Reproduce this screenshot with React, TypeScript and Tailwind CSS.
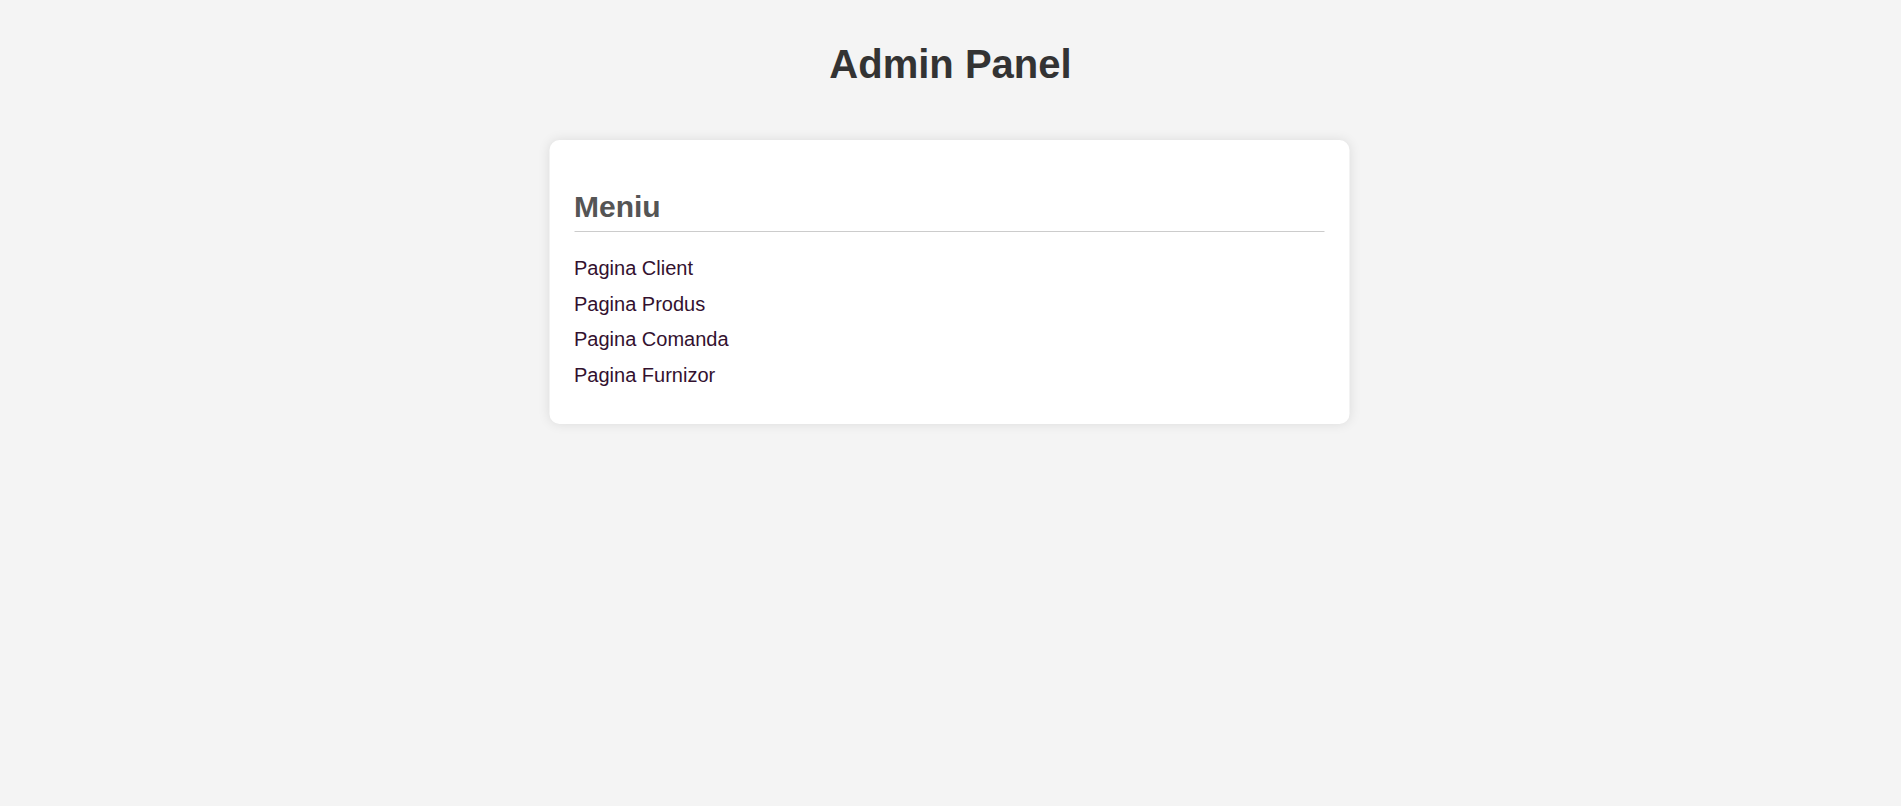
export default function App() {
  const items = ["Pagina Client", "Pagina Produs", "Pagina Comanda", "Pagina Furnizor"];
  return (
    <div className="min-h-[806px] bg-[#f4f4f4] font-['Liberation_Sans',Arial,sans-serif] pt-[41px]">
      <h1 className="text-center text-[40px] font-bold leading-[46px] text-[#333] m-0">Admin Panel</h1>
      <div className="mx-auto mt-[53px] w-[800px] -translate-x-[1.5px] rounded-[10px] bg-white px-[25px] pt-[50px] pb-[25px] shadow-[0_0_12px_rgba(0,0,0,0.1)]">
        <h2 className="text-[30px] font-bold leading-[34px] text-[#555] border-b border-[#ccc] pb-[7px] mb-[25px]">Meniu</h2>
        <ul className="flex flex-col">
          {items.map((t) => (
            <li key={t} className="mb-[12.5px] text-[20px] leading-[23px] text-[#33112f]">
              <a href="#" className="no-underline">{t}</a>
            </li>
          ))}
        </ul>
      </div>
    </div>
  );
}
